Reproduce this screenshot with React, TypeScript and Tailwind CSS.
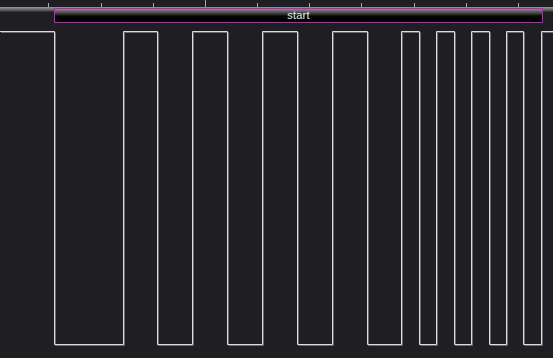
const edges = [54, 123, 157, 192, 227, 262, 297, 332, 367, 401, 419, 436, 454, 471, 489, 506, 523, 541]
const ticks = [48, 101, 153, 205, 257, 309, 361, 414, 466, 518]

const HIGH = 8.5
const LOW = 321.5

function wavePoints(dx = 0, dy = 0) {
  let level = HIGH
  const pts: string[] = [`${0 + dx},${level + dy}`]
  for (const x of edges) {
    const px = x + 0.5 + dx
    pts.push(`${px},${level + dy}`)
    level = level === HIGH ? LOW : HIGH
    pts.push(`${px},${level + dy}`)
  }
  pts.push(`${553 + dx},${level + dy}`)
  return pts.join(' ')
}

function Ruler() {
  return (
    <svg width={553} height={7} className="block shrink-0">
      {ticks.map((x) => (
        <line
          key={x}
          x1={x + 0.5}
          x2={x + 0.5}
          y1={x === 205 ? 0 : 3}
          y2={7}
          stroke="#a8a8a8"
          strokeWidth={1}
        />
      ))}
    </svg>
  )
}

export default function App() {
  return (
    <div className="w-[553px] h-[358px] bg-[#1f1f23] overflow-hidden flex flex-col font-['Liberation_Sans',sans-serif]">
      <Ruler />

      {/* track row with the "start" marker */}
      <div className="h-[16px] shrink-0 bg-[linear-gradient(to_bottom,#9a9a9a_0px,#4a4a4a_4px,#1f1f23_5px)] pt-px">
        <div className="ml-[54px] w-[489px] h-[15px] border border-[#c41ec4] bg-[linear-gradient(to_bottom,#8c8c8c_0%,#3c3c3c_35%,#050505_55%,#000000_100%)] flex items-center justify-center">
          <span className="text-[11px] leading-none text-[#e8e8e8] tracking-[0.2px]">start</span>
        </div>
      </div>

      {/* waveform */}
      <svg width={553} height={335} className="block shrink-0">
        <polyline points={wavePoints(1, 1)} fill="none" stroke="#6a6a6e" strokeWidth={1} />
        <polyline points={wavePoints()} fill="none" stroke="#dcdcdc" strokeWidth={1} />
      </svg>
    </div>
  )
}
